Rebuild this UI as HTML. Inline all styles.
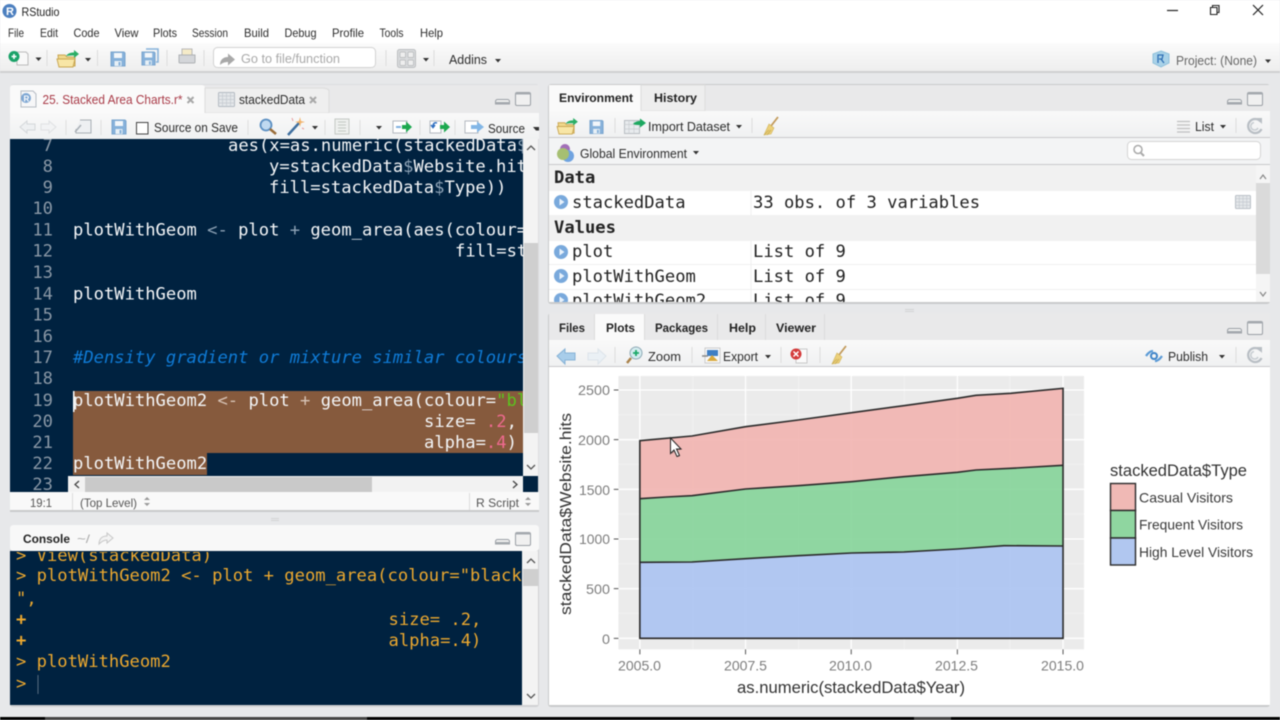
<!DOCTYPE html>
<html><head><meta charset="utf-8"><title>RStudio</title>
<style>
html,body{margin:0;padding:0;background:#e7e8ea;width:1280px;height:720px;overflow:hidden}
svg{display:block;position:absolute;left:0;top:0;filter:blur(.45px)}
text{font-family:"Liberation Sans",sans-serif;font-size:12px;fill:#2c2c2c;white-space:pre}
.m{font-family:"DejaVu Sans Mono","Liberation Mono",monospace;font-size:17.15px;fill:#f4f6f8}
.n{font-family:"DejaVu Sans Mono","Liberation Mono",monospace;font-size:17.15px;fill:#8a98a6;text-anchor:end}
.c{font-family:"DejaVu Sans Mono","Liberation Mono",monospace;font-size:17.15px;fill:#eba82f}
.e{font-family:"DejaVu Sans Mono","Liberation Mono",monospace;font-size:17.15px;fill:#222}
.eb{font-family:"DejaVu Sans Mono","Liberation Mono",monospace;font-size:17.15px;fill:#222;font-weight:bold}
.b{font-weight:bold;fill:#222}
.d{fill:#8ea3b6}
.tk{font-size:14px;fill:#7d7d7d}
.lg{font-size:14px;fill:#3a3a3a}
</style></head><body>
<svg width="1280" height="720" viewBox="0 0 1280 720" xmlns="http://www.w3.org/2000/svg">
<defs>
<linearGradient id="tb" x1="0" y1="0" x2="0" y2="1"><stop offset="0" stop-color="#fbfbfb"/><stop offset="1" stop-color="#eeeeee"/></linearGradient>
<linearGradient id="tb2" x1="0" y1="0" x2="0" y2="1"><stop offset="0" stop-color="#f9f9f9"/><stop offset="1" stop-color="#f0f1f2"/></linearGradient>
<clipPath id="ed"><rect x="10" y="139" width="513" height="337"/></clipPath>
<clipPath id="edn"><rect x="10" y="139" width="58" height="353"/></clipPath>
<clipPath id="con"><rect x="10" y="552" width="512" height="153"/></clipPath>
<clipPath id="env"><rect x="549" y="165" width="707" height="137"/></clipPath>
<symbol id="floppy" viewBox="0 0 16 16" overflow="visible"><path d="M1 1h13l1 1v13H1z" fill="#86b1da" stroke="#79a4cd"/><rect x="4" y="2" width="8" height="5" fill="#f2f6fa"/><rect x="4.500" y="10" width="7" height="5" fill="#e8f0f6"/><rect x="8.500" y="11" width="2" height="3.500" fill="#86b1da"/></symbol>
<symbol id="broom" viewBox="0 0 18 20" overflow="visible"><path d="M16 1L9 10" stroke="#c29a5a" stroke-width="1.800"/><path d="M7 8l5 4-3 6-7 1z" fill="#ecd07a" stroke="#d0b35a" stroke-width=".6"/><path d="M2 19l5-5M5 19l4-5" stroke="#c4a852" stroke-width=".7"/></symbol>
<symbol id="refresh" viewBox="0 0 18 18" overflow="visible"><path d="M14.500 4.500A7 7 0 1 0 15.500 12" fill="none" stroke="#b8bec4" stroke-width="2.200"/><path d="M8 5.500A3.800 3.800 0 1 0 12 11" fill="none" stroke="#c8cdd2" stroke-width="1.500"/><path d="M10 1l6 0 0 6z" fill="#b8bec4"/></symbol>
<symbol id="minmax" viewBox="0 0 37 18" overflow="visible"><path d="M1.500 11.500a2 2 0 0 1 2-2h10a2 2 0 0 1 2 2V14H1.500z" fill="#f0f0f0" stroke="#9a9fa5"/><rect x="1.500" y="12" width="14" height="2" fill="#a5aaaf"/><rect x="21.500" y="2.500" width="15" height="13" rx="1.500" fill="#f0f0f0" stroke="#9a9fa5"/><rect x="21.500" y="2.500" width="15" height="2" fill="#a5aaaf"/></symbol>
<symbol id="grid" viewBox="0 0 17 15" overflow="visible"><rect x=".5" y=".5" width="16" height="14" rx="1" fill="#e4e7ea" stroke="#b4bbc2"/><path d="M.5 4h16M.5 7.500h16M.5 11h16M4.500.5v14M8.500.5v14M12.500.5v14" stroke="#c3c9cf" stroke-width=".7"/></symbol>
<symbol id="folder" viewBox="0 0 24 18" overflow="visible"><path d="M2 5h7l2 2h8v9H3z" fill="#f0d88c" stroke="#c9a652"/><path d="M1 9h18l-2 8H3z" fill="#f8e6a6" stroke="#c9a652"/><path d="M10 6c2-3 5-3.500 8-3.500V0l5 4-5 4V5.500c-3 0-5 0-8 .5z" fill="#2bae66"/></symbol>
<symbol id="dot" viewBox="0 0 14 14" overflow="visible"><circle cx="7" cy="7" r="7" fill="#79a9dc"/><path d="M5.500 3.500L10.500 7l-5 3.500z" fill="#e9f2fb"/></symbol>
</defs>

<!-- window -->
<rect width="1280" height="720" fill="#e7e8ea"/>
<rect width="1280" height="43" fill="#fff"/>
<circle cx="9.500" cy="11" r="7" fill="#4c7fbf"/>
<text x="6" y="15" style="font-size:11px;font-weight:bold;fill:#fff">R</text>
<text x="21.500" y="16" textLength="38" lengthAdjust="spacingAndGlyphs" style="fill:#222">RStudio</text>
<path d="M1167 10.500h11" stroke="#222" stroke-width="1.200"/>
<path d="M1210.500 7.500h6.500v7h-6.500zM1212.500 7.500v-2h6.500v7h-2" fill="none" stroke="#222" stroke-width="1.100"/>
<path d="M1253 5l10 10M1263 5l-10 10" stroke="#222" stroke-width="1.200"/>
<text x="8" y="37" textLength="16" lengthAdjust="spacingAndGlyphs">File</text>
<text x="40" y="37" textLength="18" lengthAdjust="spacingAndGlyphs">Edit</text>
<text x="73.500" y="37" textLength="26" lengthAdjust="spacingAndGlyphs">Code</text>
<text x="114.500" y="37" textLength="24" lengthAdjust="spacingAndGlyphs">View</text>
<text x="153" y="37" textLength="24" lengthAdjust="spacingAndGlyphs">Plots</text>
<text x="192" y="37" textLength="36" lengthAdjust="spacingAndGlyphs">Session</text>
<text x="244" y="37" textLength="25" lengthAdjust="spacingAndGlyphs">Build</text>
<text x="284.500" y="37" textLength="32" lengthAdjust="spacingAndGlyphs">Debug</text>
<text x="332" y="37" textLength="32" lengthAdjust="spacingAndGlyphs">Profile</text>
<text x="379.500" y="37" textLength="24" lengthAdjust="spacingAndGlyphs">Tools</text>
<text x="420" y="37" textLength="23" lengthAdjust="spacingAndGlyphs">Help</text>

<!-- main toolbar -->
<rect y="43" width="1280" height="28" fill="url(#tb)"/>
<rect y="71" width="1280" height="2" fill="#cfd0d1"/>
<path d="M17 52h9l2 2v11H17z" fill="#f8f8f8" stroke="#bbb"/>
<circle cx="14" cy="56.500" r="5.500" fill="#1aa268"/><path d="M11.500 56.500h5M14 54v5" stroke="#fff" stroke-width="1.600"/>
<path d="M35.500 57.500h6l-3 3.500z" fill="#333"/>
<path d="M47 50v16M97.500 50v16M167 50v16M204 50v16M386 50v16M434 50v16" stroke="#dcdcdc"/>
<use href="#folder" x="56" y="50" width="24" height="18"/>
<path d="M85 58h6l-3 3.500z" fill="#333"/>
<use href="#floppy" x="110" y="51" width="16" height="16"/>
<use href="#floppy" x="141" y="51" width="15" height="15"/><path d="M146 49h12v13h-2" fill="none" stroke="#86b1da" stroke-width="1.500"/>
<path d="M182 49h10v6h-10z" fill="#f5ebc8" stroke="#b8b8b8"/><path d="M179 55h16v7a1 1 0 0 1-1 1h-14a1 1 0 0 1-1-1z" fill="#d4d6d9" stroke="#aeb1b4"/>
<rect x="213.500" y="47.500" width="162" height="20" rx="4" fill="#fff" stroke="#d2d2d2"/>
<path d="M220 65c0-5 3-8 8-8v-3.500l7 6-7 6V62c-3 0-6 1-8 3z" fill="#a9a9a9"/>
<text x="241" y="63" textLength="99" lengthAdjust="spacingAndGlyphs" style="fill:#a9a9a9;font-size:12.500px">Go to file/function</text>
<rect x="397.500" y="49.500" width="18" height="18" rx="2" fill="#d9dbdd" stroke="#bcbec0"/>
<rect x="400" y="52" width="5.500" height="5.500" rx="1" fill="#eee" stroke="#b3b5b7" stroke-width=".7"/><rect x="408" y="52" width="5.500" height="5.500" rx="1" fill="#eee" stroke="#b3b5b7" stroke-width=".7"/><rect x="400" y="60" width="5.500" height="5.500" rx="1" fill="#eee" stroke="#b3b5b7" stroke-width=".7"/><rect x="408" y="60" width="5.500" height="5.500" rx="1" fill="#eee" stroke="#b3b5b7" stroke-width=".7"/>
<path d="M423 58h6l-3 3.500z" fill="#333"/>
<text x="449" y="64" textLength="38" lengthAdjust="spacingAndGlyphs" style="font-size:12.500px">Addins</text>
<path d="M495 59h6l-3 3.500z" fill="#333"/>
<path d="M1161 51l8 3v9l-8 4-8-4v-9z" fill="#a9d2e8" stroke="#8fc0db"/><path d="M1158 63v-8h5l-1 4h-3M1161 59l3 4" stroke="#2f6fb5" stroke-width="1.300" fill="none"/>
<text x="1176" y="65" textLength="81" lengthAdjust="spacingAndGlyphs" style="fill:#666;font-size:12.500px">Project: (None)</text>
<path d="M1265 59.500h6l-3 3.500z" fill="#333"/>

<!-- SOURCE PANE -->
<rect x="10" y="84" width="529" height="428" rx="3" fill="#dcdde0"/>
<rect x="10" y="85" width="529" height="28" fill="#e9e9ea"/>
<path d="M10 113V88a3 3 0 0 1 3-3h189a3 3 0 0 1 3 3v25z" fill="#fafafa"/>
<path d="M205 113V88h117a7 3 0 0 1 7 3v22z" fill="#efefef" stroke="#dcdcdc"/>
<path d="M21 91h12l3 3v13H21z" fill="#f6f7f8" stroke="#b6bcc4"/><circle cx="26" cy="98" r="5" fill="#7ea7d3"/><text x="23.500" y="101.500" style="font-size:8px;font-weight:bold;fill:#fff">R</text>
<text x="42.500" y="104" textLength="140" lengthAdjust="spacingAndGlyphs" style="fill:#a93a47;font-size:12.500px">25. Stacked Area Charts.r*</text>
<path d="M187.500 97l6 6M193.500 97l-6 6" stroke="#a8a8a8" stroke-width="2"/>
<use href="#grid" x="218" y="91" width="17" height="17"/>
<text x="239" y="104" textLength="66" lengthAdjust="spacingAndGlyphs" style="font-size:12.500px">stackedData</text>
<path d="M310 97l6 6M316 97l-6 6" stroke="#a8a8a8" stroke-width="2"/>
<use href="#minmax" x="494" y="90" width="37" height="18"/>

<rect x="10" y="113" width="529" height="26" fill="url(#tb2)"/>
<path d="M20 127l7-6v3h8v6h-8v3z" fill="#eef0f2" stroke="#d4d7da"/><path d="M56 127l-7-6v3h-8v6h8v3z" fill="#f2f3f4" stroke="#dfe1e3"/>
<path d="M66 120v15M101 120v15M248 120v15M325 120v15M360 120v15M420 120v15M455 120v15" stroke="#dedede"/>
<path d="M80 120h11v13H76v-4" fill="#eef0f2" stroke="#a9afb5"/><path d="M75 132l6-7" stroke="#a9afb5" stroke-width="1.500"/>
<use href="#floppy" x="111" y="119" width="16" height="16"/>
<rect x="136.500" y="122.500" width="11.500" height="11.500" fill="#fff" stroke="#444"/>
<text x="154" y="132" textLength="84" lengthAdjust="spacingAndGlyphs" style="font-size:12.500px">Source on Save</text>
<circle cx="266" cy="125" r="5.500" fill="#bfd9f0" stroke="#5b8fc2" stroke-width="1.800"/><path d="M270 129l6 5" stroke="#9a6d3a" stroke-width="2.500"/>
<path d="M288 135l11-12" stroke="#3f6f9f" stroke-width="2.500"/><path d="M300 117l1 4 4 1-4 1-1 4-1-4-4-1 4-1z" fill="#f2b36b"/><path d="M292 118l1 3M304 129l-2-1" stroke="#e89a9a"/>
<path d="M312 126h6l-3 3.500z" fill="#333"/>
<rect x="335" y="119" width="14" height="15" fill="#eef0ee" stroke="#c4c8c4"/><path d="M338 122h8M338 125h8M338 128h8M338 131h8" stroke="#c4c8c4"/>
<path d="M376 126h6l-3 3.500z" fill="#333"/>
<rect x="393" y="121" width="14" height="12" fill="#fff" stroke="#b3b9bf"/><path d="M396 127h5" stroke="#7fb0e0" stroke-width="2"/><path d="M402 125h4v-3.500l6 5.500-6 5.500V129h-4z" fill="#1ca84f"/>
<rect x="430" y="121" width="11" height="12" fill="#fff" stroke="#b3b9bf"/><path d="M437 123c-3-1-4 1-4 4M431 125l2 2.500 2-2.500" stroke="#2f6fc0" fill="none" stroke-width="1.500"/><path d="M440 125h4v-3.500l6 5.500-6 5.500V129h-4z" fill="#1ca84f"/>
<path d="M465 121h13v12h-13z" fill="#fff" stroke="#b3b9bf"/><path d="M471 125h6v-3.500l7 5.500-7 5.500V129h-6z" fill="#82b6e6"/>
<text x="488" y="133" textLength="37" lengthAdjust="spacingAndGlyphs" style="font-size:12.500px">Source</text>
<path d="M533 127h6v3.500h-3z" fill="#333"/>

<rect x="10" y="139" width="513" height="353" fill="#002240"/>
<rect x="73" y="391" width="450" height="62" fill="#865a3d"/>
<rect x="73" y="453" width="134" height="22" fill="#865a3d"/>
<rect x="73" y="391" width="1.500" height="21" fill="#fff"/>
<g clip-path="url(#edn)">
<text class="n" x="53" y="151">7</text><text class="n" x="53" y="172">8</text><text class="n" x="53" y="193">9</text>
<text class="n" x="53" y="214">10</text><text class="n" x="53" y="235.500">11</text><text class="n" x="53" y="256.500">12</text>
<text class="n" x="53" y="278">13</text><text class="n" x="53" y="299.500">14</text><text class="n" x="53" y="320.500">15</text>
<text class="n" x="53" y="342">16</text><text class="n" x="53" y="363">17</text><text class="n" x="53" y="384">18</text>
<text class="n" x="53" y="406">19</text><text class="n" x="53" y="427">20</text><text class="n" x="53" y="448">21</text>
<text class="n" x="53" y="469">22</text><text class="n" x="53" y="490">23</text>
</g>
<g clip-path="url(#ed)">
<text class="m" x="228" y="151">aes(x=as.numeric(stackedData<tspan class="d">$</tspan>Year),</text>
<text class="m" x="269" y="172">y=stackedData<tspan class="d">$</tspan>Website.hits,</text>
<text class="m" x="269" y="193">fill=stackedData<tspan class="d">$</tspan>Type))</text>
<text class="m" x="73" y="235.500">plotWithGeom <tspan class="d">&lt;-</tspan> plot <tspan class="d">+</tspan> geom_area(aes(colour=</text>
<text class="m" x="455" y="256.500">fill=stackedData</text>
<text class="m" x="73" y="299.500">plotWithGeom</text>
<text class="m" x="73" y="363" style="fill:#0f7bd6;font-style:italic">#Density gradient or mixture similar colours</text>
<text class="m" x="73" y="406">plotWithGeom2 <tspan style="fill:#d8c4b6">&lt;-</tspan> plot <tspan style="fill:#d8c4b6">+</tspan> geom_area(colour=<tspan style="fill:#5cc51e">"black"</tspan>,</text>
<text class="m" x="424" y="427">size= <tspan style="fill:#ef6a8f">.2</tspan>,</text>
<text class="m" x="424" y="448">alpha=<tspan style="fill:#ef6a8f">.4</tspan>)</text>
<text class="m" x="73" y="469">plotWithGeom2</text>
</g>
<rect x="523" y="139" width="15" height="337" fill="#f3f3f3"/>
<rect x="524" y="243" width="14" height="190" fill="#cfcfcf"/>
<path d="M527 150l4-4 4 4M527 465l4 4 4-4" fill="none" stroke="#555" stroke-width="1.300"/>
<rect x="68" y="476" width="455" height="16" fill="#f2f2f2"/>
<rect x="85" y="477" width="287" height="15" fill="#c9c9c9"/>
<path d="M79 481l-4 3.500 4 3.500M513 481l4 3.500-4 3.500" fill="none" stroke="#444" stroke-width="1.300"/>
<rect x="523" y="476" width="15" height="16" fill="#002240"/>
<rect x="10" y="492" width="529" height="18" fill="#f9f9f9"/>
<rect x="10" y="510" width="529" height="2" fill="#c9cacb"/>
<path d="M72.500 493v17M469.500 493v17" stroke="#dcdcdc"/>
<text x="30" y="507" textLength="22" lengthAdjust="spacingAndGlyphs" style="fill:#555">19:1</text>
<text x="80" y="507" textLength="57" lengthAdjust="spacingAndGlyphs" style="fill:#555">(Top Level)</text>
<path d="M144 500l3-3 3 3zM144 503l3 3 3-3z" fill="#999"/>
<text x="476" y="507" textLength="43" lengthAdjust="spacingAndGlyphs" style="fill:#555">R Script</text>
<path d="M525 500l3-3 3 3zM525 503l3 3 3-3z" fill="#999"/>
<path d="M271 518.500h8M271 520.500h8" stroke="#d2d3d4"/>

<!-- CONSOLE -->
<rect x="10" y="525" width="529" height="182" rx="3" fill="#d0d1d3"/>
<rect x="10" y="525" width="529" height="26" rx="3" fill="#f8f8f8"/>
<text x="23" y="543" textLength="47" lengthAdjust="spacingAndGlyphs" class="b">Console</text>
<text x="77" y="543" textLength="13" lengthAdjust="spacingAndGlyphs" style="fill:#aaa">~/</text>
<path d="M99 544c0-6 4-8 8-8v-3l6 5-6 5v-3c-3 0-5 1-8 4z" fill="#f3f3f3" stroke="#c8c8c8"/>
<use href="#minmax" x="494" y="530" width="37" height="18"/>
<rect x="10" y="551" width="512" height="154" fill="#002240"/>
<g clip-path="url(#con)">
<text class="c" x="16" y="561">&gt; View(stackedData)</text>
<text class="c" x="16" y="581">&gt; plotWithGeom2 &lt;- plot + geom_area(colour="black</text>
<text class="c" x="16" y="604">",</text>
<text class="c" x="16" y="625" style="font-weight:bold">+</text><text class="c" x="388.500" y="625">size= .2,</text>
<text class="c" x="16" y="646" style="font-weight:bold">+</text><text class="c" x="388.500" y="646">alpha=.4)</text>
<text class="c" x="16" y="667">&gt; plotWithGeom2</text>
<text class="c" x="16" y="689">&gt;</text>
</g>
<rect x="37.500" y="675" width="1" height="19" fill="#566b80"/>
<rect x="522" y="551" width="16" height="154" fill="#f3f3f3"/>
<rect x="523" y="569" width="15" height="17" fill="#cfcfcf"/>
<path d="M527 563l4-4 4 4M527 694l4 4 4-4" fill="none" stroke="#555" stroke-width="1.300"/>

<!-- ENVIRONMENT -->
<rect x="548" y="84" width="722" height="220" rx="3" fill="#c9cacb"/>
<rect x="549" y="85" width="721" height="26" fill="#e9e9ea"/>
<path d="M549 111V85h92v26z" fill="#fafafa"/>
<path d="M641 111V85h64v26z" fill="#eeeeee" stroke="#dcdcdc"/>
<text x="559" y="102" textLength="74" lengthAdjust="spacingAndGlyphs" class="b">Environment</text>
<text x="654" y="102" textLength="43" lengthAdjust="spacingAndGlyphs" class="b">History</text>
<use href="#minmax" x="1226" y="90" width="37" height="18"/>
<rect x="549" y="111" width="721" height="26" fill="url(#tb2)"/>
<rect x="549" y="137" width="721" height="1" fill="#c8c9ca"/>
<use href="#folder" x="556" y="118" width="23" height="17"/>
<use href="#floppy" x="589" y="119" width="15" height="16"/>
<path d="M615 118v15M752 118v15M1236 118v15" stroke="#dcdcdc"/>
<rect x="624.500" y="120.500" width="15" height="13" fill="#e8ebee" stroke="#b8bdc2"/><path d="M624.500 124.500h15M624.500 129h15M629 120.500v13M634 120.500v13" stroke="#c8ccd0" stroke-width=".7"/>
<path d="M633 124c2-2 4-3 7-3v-2.500l6 4.500-6 4.500V125c-3 0-5 0-7-1z" fill="#1ca860"/>
<text x="648" y="131" textLength="82" lengthAdjust="spacingAndGlyphs" style="font-size:12.500px">Import Dataset</text>
<path d="M736 125h6l-3 3.500z" fill="#333"/>
<use href="#broom" x="762" y="116" width="18" height="20"/>
<path d="M1177 121.500h13M1177 125h13M1177 128.500h13M1177 132h13" stroke="#c0c0c0" stroke-width="1.300"/>
<text x="1195" y="131" textLength="19" lengthAdjust="spacingAndGlyphs" style="font-size:12.500px">List</text>
<path d="M1220 125h6l-3 3.500z" fill="#333"/>
<use href="#refresh" x="1246" y="117" width="18" height="18"/>
<rect x="549" y="138" width="721" height="26" fill="#f3f4f5"/>
<rect x="549" y="164" width="721" height="1" fill="#c8c9ca"/>
<circle cx="565" cy="149" r="5" fill="#a26fb8"/><circle cx="568" cy="156" r="6" fill="#6fa3e0"/><circle cx="563" cy="154" r="6" fill="#a6bf72"/>
<text x="580" y="158" textLength="107" lengthAdjust="spacingAndGlyphs" style="font-size:12.500px">Global Environment</text>
<path d="M693 151h6l-3 3.500z" fill="#333"/>
<rect x="1127.500" y="141.500" width="133" height="18" rx="4" fill="#fff" stroke="#d4d4d4"/>
<circle cx="1138" cy="149.500" r="4" fill="none" stroke="#aaa" stroke-width="1.500"/><path d="M1141 153l3 3" stroke="#aaa" stroke-width="2"/>
<rect x="549" y="165" width="707" height="137" fill="#fff"/>
<rect x="549" y="165" width="707" height="26" fill="#f1f1f1"/>
<rect x="549" y="215" width="707" height="26" fill="#f1f1f1"/>
<path d="M751 191v24M751 241v61M549 264.500h707M549 289.500h707" stroke="#efefef"/>
<g clip-path="url(#env)">
<text class="eb" x="554" y="183">Data</text>
<use href="#dot" x="554" y="195" width="14" height="14"/>
<text class="e" x="572" y="208">stackedData</text><text class="e" x="753" y="208">33 obs. of 3 variables</text>
<text class="eb" x="554" y="233">Values</text>
<use href="#dot" x="554" y="245" width="14" height="14"/>
<text class="e" x="572" y="257">plot</text><text class="e" x="753" y="257">List of 9</text>
<use href="#dot" x="554" y="269" width="14" height="14"/>
<text class="e" x="572" y="282">plotWithGeom</text><text class="e" x="753" y="282">List of 9</text>
<use href="#dot" x="554" y="293" width="14" height="14"/>
<text class="e" x="572" y="306">plotWithGeom2</text><text class="e" x="753" y="306">List of 9</text>
</g>
<use href="#grid" x="1235" y="195" width="16" height="14"/>
<rect x="1256" y="165" width="14" height="137" fill="#f5f5f5"/>
<rect x="1256" y="183" width="14" height="91" fill="#dadada"/>
<path d="M1260 179l3-4 3 4M1260 292l3 4 3-4" fill="none" stroke="#888" stroke-width="1.200"/>
<path d="M905 309.500h9M905 311.500h9" stroke="#d2d3d4"/>

<!-- PLOTS -->
<rect x="548" y="313" width="722" height="394" rx="3" fill="#c9cacb"/>
<rect x="549" y="313" width="721" height="27" fill="#e9e9ea"/>
<rect x="594" y="314" width="50" height="26" fill="#fafafa"/>
<path d="M594.500 314v26M644.500 314v26M717.500 314v26M765.500 314v26M824.500 314v26" stroke="#dcdcdc"/>
<text x="559" y="332" textLength="26" lengthAdjust="spacingAndGlyphs" class="b">Files</text>
<text x="606" y="332" textLength="29" lengthAdjust="spacingAndGlyphs" class="b">Plots</text>
<text x="655" y="332" textLength="53" lengthAdjust="spacingAndGlyphs" class="b">Packages</text>
<text x="729" y="332" textLength="27" lengthAdjust="spacingAndGlyphs" class="b">Help</text>
<text x="776" y="332" textLength="40" lengthAdjust="spacingAndGlyphs" class="b">Viewer</text>
<use href="#minmax" x="1226" y="319" width="37" height="18"/>
<rect x="549" y="340" width="721" height="26" fill="url(#tb2)"/>
<rect x="549" y="366" width="721" height="1" fill="#c8c9ca"/>
<path d="M557 356l8-7v4h10v7h-10v4z" fill="#a8cdea" stroke="#86b2d6"/>
<path d="M606 356l-8-7v4h-10v7h10v4z" fill="#eaf0f5" stroke="#dde4ea"/>
<path d="M615 347v16M692 347v16M781 347v16M820 347v16M1236 347v16" stroke="#dcdcdc"/>
<circle cx="636" cy="353" r="6" fill="#d5ecf0" stroke="#8ea9b5"/><path d="M636 350v6M633 353h6" stroke="#19a868" stroke-width="1.800"/><path d="M631 358l-4 5" stroke="#a9824a" stroke-width="2.500"/>
<text x="648" y="361" textLength="33" lengthAdjust="spacingAndGlyphs" style="font-size:12.500px">Zoom</text>
<rect x="705" y="348" width="15" height="15" fill="#f8f8f8" stroke="#ccc"/><path d="M707 350h11v6h-11z" fill="#3f7fc4"/><path d="M707 361l5-6 6 6z" fill="#d9a93e"/><path d="M702 356h6" stroke="#888" stroke-width="1.500"/>
<text x="723" y="361" textLength="35" lengthAdjust="spacingAndGlyphs" style="font-size:12.500px">Export</text>
<path d="M765 355h6l-3 3.500z" fill="#333"/>
<path d="M796 349h11v14h-11z" fill="#fafafa" stroke="#c8c8c8"/>
<circle cx="796" cy="354" r="5.500" fill="#d43a3a"/><path d="M793.500 351.500l5 5M798.500 351.500l-5 5" stroke="#fff" stroke-width="1.500"/>
<use href="#broom" x="830" y="345" width="18" height="20"/>
<circle cx="1154" cy="356" r="3" fill="none" stroke="#3e84c8" stroke-width="2"/><path d="M1146 356c2-3 4-5 7-5M1162 356c-2 3-4 5-7 5" fill="none" stroke="#5a9ad6" stroke-width="2.200"/>
<text x="1168" y="361" textLength="40" lengthAdjust="spacingAndGlyphs" style="font-size:12.500px">Publish</text>
<path d="M1219 355h6l-3 3.500z" fill="#333"/>
<use href="#refresh" x="1246" y="346" width="18" height="18"/>
<rect x="549" y="367" width="721" height="338" fill="#fff"/>

<!-- chart -->
<g transform="translate(550,370) scale(.46556,.33333)">
<rect x="147" y="18" width="1000" height="820" fill="#ebebeb"/>
<path vector-effect="non-scaling-stroke" d="M147 134H1147M147 283H1147M147 432H1147M147 581H1147M147 730H1147M307 18V838M534 18V838M761 18V838M988 18V838" stroke="#f5f5f5" stroke-width=".7"/>
<path vector-effect="non-scaling-stroke" d="M147 60H1147M147 209H1147M147 358H1147M147 507H1147M147 656H1147M147 805H1147M193 18V838M420 18V838M647 18V838M875 18V838M1102 18V838" stroke="#fff" stroke-width="1.300"/>
<path d="M193 212L305 198L420 170L533 150L648 128L760 107L875 85L915 76L990 70L1102 55V286L990 295L915 300L875 307L760 320L648 335L533 347L420 357L305 377L250 381L193 386Z" fill="#f1b2ae" fill-opacity=".88"/>
<path d="M193 386L250 381L305 377L420 357L533 347L648 335L760 320L875 307L915 300L990 295L1102 286V528L975 527L875 537L760 546L648 549L533 557L420 566L305 576L193 577Z" fill="#82d396" fill-opacity=".88"/>
<path d="M193 577L305 576L420 566L533 557L648 549L760 546L875 537L975 527L1102 528V805H193Z" fill="#a9c2f1" fill-opacity=".88"/>
<g fill="none" stroke="#2a2a2a">
<path vector-effect="non-scaling-stroke" stroke-width="1.600" d="M193 212L305 198L420 170L533 150L648 128L760 107L875 85L915 76L990 70L1102 55V805H193Z"/>
<path vector-effect="non-scaling-stroke" stroke-width="1.600" d="M193 386L250 381L305 377L420 357L533 347L648 335L760 320L875 307L915 300L990 295L1102 286"/>
<path vector-effect="non-scaling-stroke" stroke-width="1.600" d="M193 577L305 576L420 566L533 557L648 549L760 546L875 537L975 527L1102 528"/>
</g>
<path vector-effect="non-scaling-stroke" stroke="#555" d="M137 60H147M137 209H147M137 358H147M137 507H147M137 656H147M137 805H147M193 838V853M420 838V853M647 838V853M875 838V853M1102 838V853"/>
</g>
<text class="tk" x="578" y="395" textLength="32" lengthAdjust="spacingAndGlyphs">2500</text>
<text class="tk" x="578" y="445" textLength="32" lengthAdjust="spacingAndGlyphs">2000</text>
<text class="tk" x="579" y="495" textLength="31" lengthAdjust="spacingAndGlyphs">1500</text>
<text class="tk" x="579" y="544" textLength="31" lengthAdjust="spacingAndGlyphs">1000</text>
<text class="tk" x="586" y="594" textLength="24" lengthAdjust="spacingAndGlyphs">500</text>
<text class="tk" x="602" y="644" textLength="8" lengthAdjust="spacingAndGlyphs">0</text>
<text class="tk" x="618" y="670.500" textLength="43" lengthAdjust="spacingAndGlyphs">2005.0</text>
<text class="tk" x="724" y="670.500" textLength="43" lengthAdjust="spacingAndGlyphs">2007.5</text>
<text class="tk" x="829" y="670.500" textLength="43" lengthAdjust="spacingAndGlyphs">2010.0</text>
<text class="tk" x="935" y="670.500" textLength="43" lengthAdjust="spacingAndGlyphs">2012.5</text>
<text class="tk" x="1041" y="670.500" textLength="43" lengthAdjust="spacingAndGlyphs">2015.0</text>
<text x="737" y="693" textLength="228" lengthAdjust="spacingAndGlyphs" style="font-size:16.500px;fill:#333">as.numeric(stackedData$Year)</text>
<text transform="translate(571,615) rotate(-90)" x="0" y="0" textLength="202" lengthAdjust="spacingAndGlyphs" style="font-size:15.500px;fill:#333">stackedData$Website.hits</text>
<text x="1110" y="476" textLength="137" lengthAdjust="spacingAndGlyphs" style="font-size:16.500px;fill:#333">stackedData$Type</text>
<rect x="1110.500" y="483.500" width="25" height="27" fill="#f0b9b5" stroke="#2a2a2a" stroke-width="1.400"/>
<rect x="1110.500" y="510.500" width="25" height="27.500" fill="#8fd6a0" stroke="#2a2a2a" stroke-width="1.400"/>
<rect x="1110.500" y="538" width="25" height="27" fill="#b1c7f0" stroke="#2a2a2a" stroke-width="1.400"/>
<text class="lg" x="1139" y="502.500" textLength="94" lengthAdjust="spacingAndGlyphs">Casual Visitors</text>
<text class="lg" x="1139" y="529.500" textLength="104" lengthAdjust="spacingAndGlyphs">Frequent Visitors</text>
<text class="lg" x="1139" y="557" textLength="114" lengthAdjust="spacingAndGlyphs">High Level Visitors</text>
<path d="M672 440v14l3-3 3 6 2-1-3-6h4z" fill="#000" fill-opacity=".25"/>
<path d="M670.500 438v15.500l3.500-3.500 3 6.500 2.500-1-3-6.500h4.500z" fill="#fff" stroke="#222" stroke-width="1"/>

<!-- bottom -->
<rect y="717" width="1280" height="3" fill="#000"/>
<rect x="45" y="717" width="322" height="3" fill="#444"/>
<rect x="914" y="717" width="37" height="3" fill="#444"/>
</svg>
</body></html>
